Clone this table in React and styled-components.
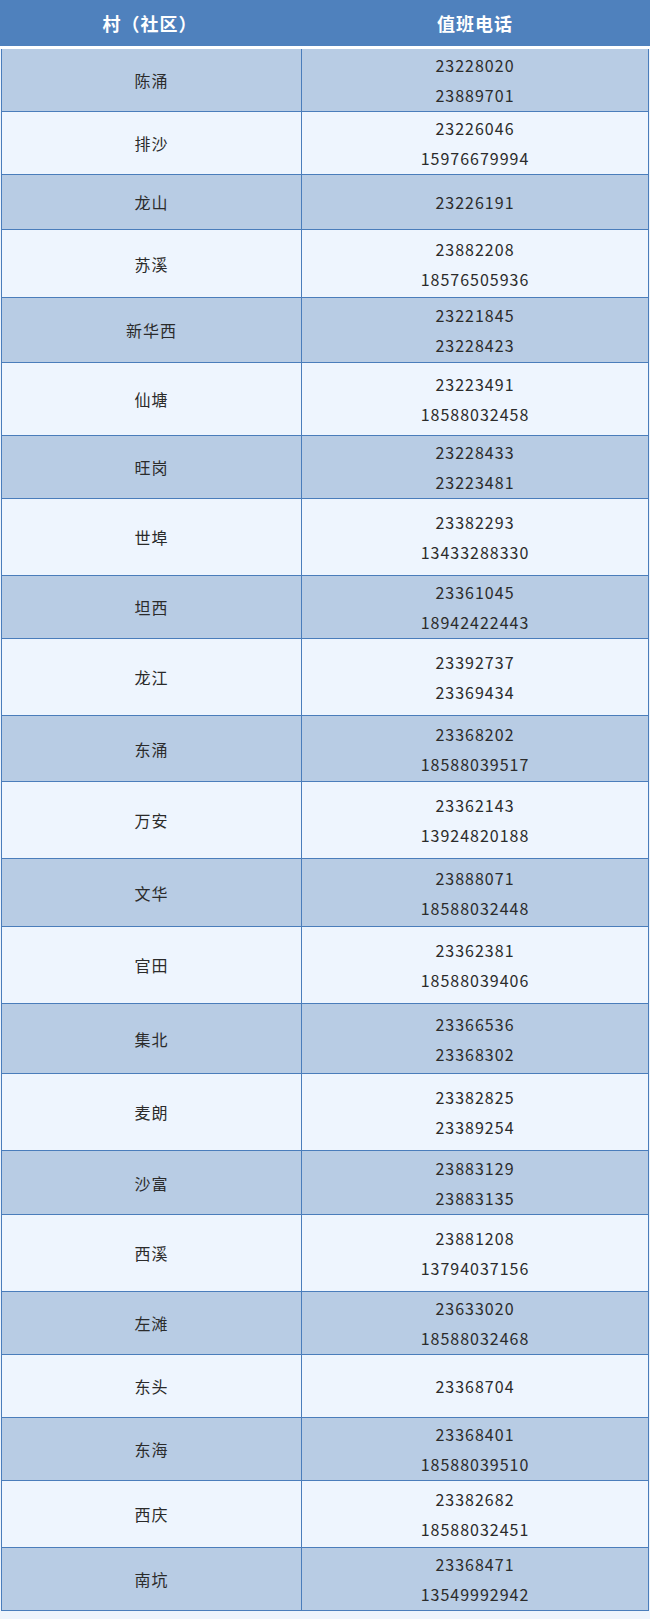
import styled, { createGlobalStyle } from "styled-components";

const GlobalStyle = createGlobalStyle`
    body {
        margin: 0;
        background-color: #eef4fc;
        font-family: "Noto Sans CJK SC", "Noto Sans", sans-serif;
    }
`

const Table = styled.div`
    box-sizing: border-box;
    width: 648px;
    margin: 0 1px;
    padding-bottom: 8px;
`

const HeadRow = styled.div`
    display: grid;
    grid-template-columns: 300px 1fr;
    height: 46px;
    background-color: #4f81bd;
    border-bottom: 3px solid #ffffff;
    margin-left: -1px;
    margin-right: -1px;
`

const HeadCell = styled.div`
    display: flex;
    align-items: center;
    justify-content: center;
    color: #ffffff;
    font-size: 18px;
    font-weight: bold;
    letter-spacing: 1px;
`

const Row = styled.div`
    box-sizing: border-box;
    display: grid;
    grid-template-columns: 300px 1fr;
    border-left: 1px solid #4a7dbb;
    border-right: 1px solid #4a7dbb;
    border-bottom: 1px solid #4a7dbb;
    background-color: ${(p) => (p.$dark ? "#b8cce4" : "#eef5fe")};
`

const Cell = styled.div`
    box-sizing: border-box;
    display: flex;
    flex-direction: column;
    align-items: center;
    justify-content: center;
    color: #2b2b2b;
    font-size: 16px;
    line-height: 30px;
    letter-spacing: 1px;
    border-right: ${(p) => (p.$divider ? "1px solid #4a7dbb" : "none")};
`

const rows = [
    ["陈涌", ["23228020", "23889701"], 63],
    ["排沙", ["23226046", "15976679994"], 63],
    ["龙山", ["23226191"], 55],
    ["苏溪", ["23882208", "18576505936"], 68],
    ["新华西", ["23221845", "23228423"], 65],
    ["仙塘", ["23223491", "18588032458"], 73],
    ["旺岗", ["23228433", "23223481"], 63],
    ["世埠", ["23382293", "13433288330"], 77],
    ["坦西", ["23361045", "18942422443"], 63],
    ["龙江", ["23392737", "23369434"], 77],
    ["东涌", ["23368202", "18588039517"], 66],
    ["万安", ["23362143", "13924820188"], 77],
    ["文华", ["23888071", "18588032448"], 68],
    ["官田", ["23362381", "18588039406"], 77],
    ["集北", ["23366536", "23368302"], 70],
    ["麦朗", ["23382825", "23389254"], 77],
    ["沙富", ["23883129", "23883135"], 64],
    ["西溪", ["23881208", "13794037156"], 77],
    ["左滩", ["23633020", "18588032468"], 63],
    ["东头", ["23368704"], 63],
    ["东海", ["23368401", "18588039510"], 63],
    ["西庆", ["23382682", "18588032451"], 67],
    ["南坑", ["23368471", "13549992942"], 63],
]

export default function App() {
    return <>
        <GlobalStyle/>
        <Table>
            <HeadRow>
                <HeadCell>村（社区）</HeadCell>
                <HeadCell>值班电话</HeadCell>
            </HeadRow>
            {rows.map(([name, phones, height], i) => (
                <Row key={name} $dark={i % 2 === 0} style={{ height }}>
                    <Cell $divider>{name}</Cell>
                    <Cell>
                        {phones.map((p) => <span key={p}>{p}</span>)}
                    </Cell>
                </Row>
            ))}
        </Table>
    </>
}
